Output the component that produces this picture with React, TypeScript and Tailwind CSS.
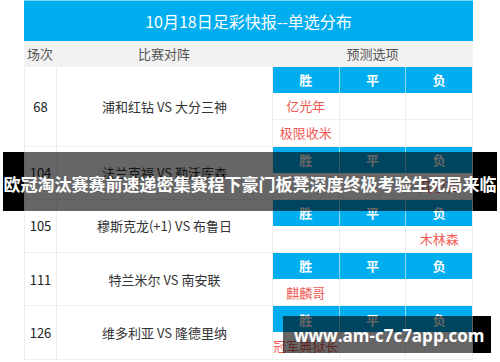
const matches = [
  { no: "68", teams: "浦和红钻 VS 大分三神", picks: [["亿光年", "", ""], ["极限收米", "", ""]] },
  { no: "104", teams: "法兰克福 VS 勒沃库森", picks: [["", "", "凡尔赛"]] },
  { no: "105", teams: "穆斯克龙(+1) VS 布鲁日", picks: [["", "", "木林森"]] },
  { no: "111", teams: "特兰米尔 VS 南安联", picks: [["麒麟哥", "", ""]] },
  { no: "126", teams: "维多利亚 VS 隆德里纳", picks: [["冠军典狱长", "", ""]] },
];

const ROW = 26.6;

export default function App() {
  return (
    <div
      className="relative w-[500px] h-[362px] overflow-hidden bg-white"
      style={{ fontFamily: '"Noto Sans CJK SC", "Noto Sans", sans-serif' }}
    >
      <div className="ml-[24px] w-[449px]">
        {/* title */}
        <div className="h-[41px] bg-[#00adef] border-t border-[#7fd6f7] flex items-center justify-center text-white text-[16px]">
          10月18日足彩快报--单选分布
        </div>

        {/* header */}
        <div className="h-[26px] bg-[#f2f2f2] flex text-[13px] text-[#555]">
          <div className="w-[32px] flex items-center justify-center">场次</div>
          <div className="w-[216px] flex items-center justify-center">比赛对阵</div>
          <div className="flex-1 flex items-center justify-center">预测选项</div>
        </div>

        {/* matches */}
        <div className="border-l border-r border-[#eee]">
          {matches.map((m) => (
            <div
              key={m.no}
              className="flex border-b border-[#eee]"
              style={{ height: (m.picks.length + 1) * ROW }}
            >
              <div className="w-[32px] border-r border-[#eee] flex items-center justify-center text-[13px] text-[#222]">
                {m.no}
              </div>
              <div className="w-[216px] border-r border-[#eee] flex items-center justify-center text-[13px] text-[#333]">
                {m.teams}
              </div>
              <div className="flex-1 flex flex-col">
                <div className="flex-1 flex bg-[#00adef] text-white text-[13px] font-bold">
                  <div className="flex-1 border-r border-[#8fd8f6] flex items-center justify-center">胜</div>
                  <div className="flex-1 border-r border-[#8fd8f6] flex items-center justify-center">平</div>
                  <div className="flex-1 flex items-center justify-center">负</div>
                </div>
                {m.picks.map((p, i) => (
                  <div
                    key={i}
                    className={`flex-1 flex text-[13px] text-[#f25a55] ${i > 0 ? "border-t border-[#eee]" : ""}`}
                  >
                    <div className="flex-1 border-r border-[#eee] flex items-center justify-center whitespace-nowrap">{p[0]}</div>
                    <div className="flex-1 border-r border-[#eee] flex items-center justify-center whitespace-nowrap">{p[1]}</div>
                    <div className="flex-1 flex items-center justify-center whitespace-nowrap">{p[2]}</div>
                  </div>
                ))}
              </div>
            </div>
          ))}
        </div>
      </div>

      {/* headline banner */}
      <div className="absolute top-[152px] left-[3px] w-[494px] h-[59px] flex">
        <div className="w-[21px] bg-black" />
        <div className="w-[449px] bg-black/60" />
        <div className="flex-1 bg-black" />
        <div className="absolute inset-0 flex items-center justify-center pt-[5px] text-white text-[17px] font-bold whitespace-nowrap">
          欧冠淘汰赛赛前速递密集赛程下豪门板凳深度终极考验生死局来临
        </div>
      </div>

      {/* watermark */}
      <div className="absolute top-[316px] left-[283px] w-[208px] h-[37px] flex">
        <div className="w-[190px] bg-black/60" />
        <div className="flex-1 bg-black" />
        <div className="absolute inset-0 flex items-center pl-[11px] pt-[2px] text-white text-[17px] font-bold whitespace-nowrap font-['Open_Sans',sans-serif]">
          www.am-c7c7app.com
        </div>
      </div>
    </div>
  );
}
